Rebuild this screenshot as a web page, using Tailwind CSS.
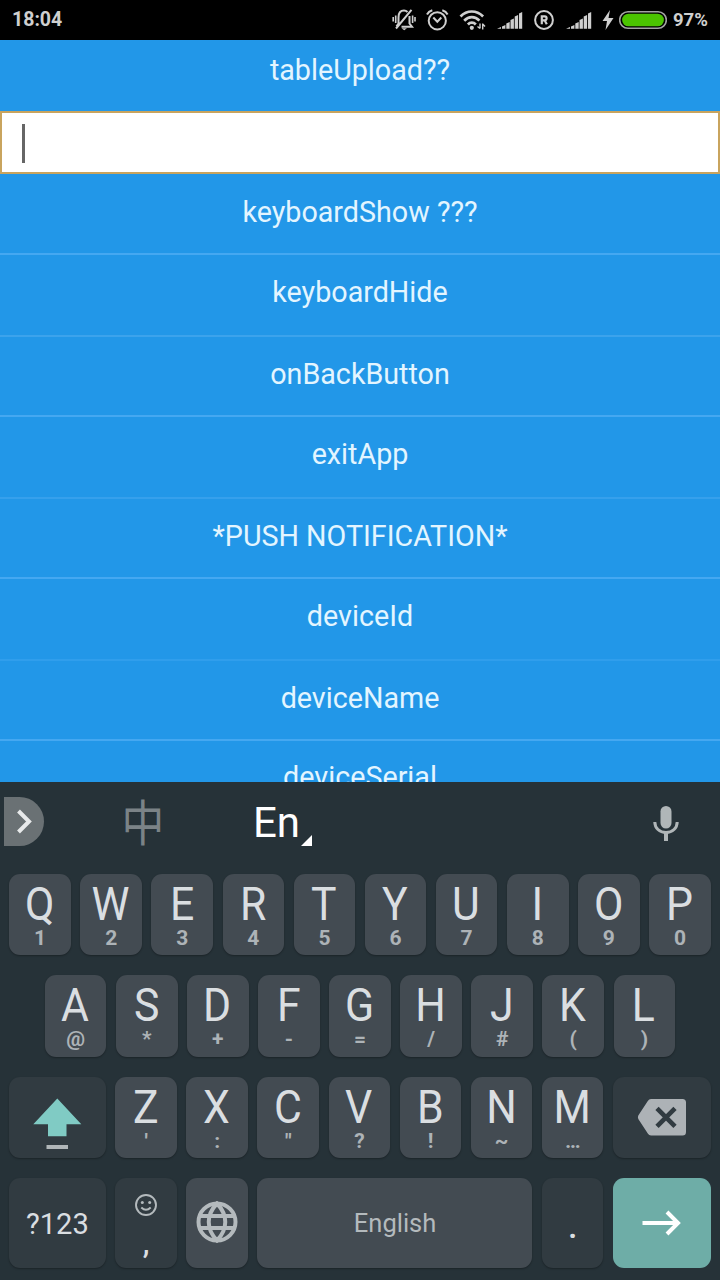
<!DOCTYPE html>
<html lang="en">
<head>
<meta charset="utf-8">
<title>Device test</title>
<script src="https://cdn.jsdelivr.net/npm/@tailwindcss/browser@4"></script>
</head>
<body class="w-[720px] h-[1280px] overflow-hidden flex flex-col bg-[#263238] font-['Roboto',sans-serif]">
<header class="h-10 shrink-0 bg-black flex items-center text-[#cfcfcf] pl-3">
  <span class="w-[380px] text-[19.5px] font-bold leading-10">18:04</span>
  <svg class="w-6 h-6 shrink-0" viewBox="0 0 24 24" fill="none" stroke="currentColor" stroke-width="2"><path d="M4.500 18.300L6.500 15.500V9.500C6.500 4.500 9 2.600 12 2.600Q14 2.600 15.500 4M17.500 8V15.500L20 18.700H9.500M4 20.500L19.500 1.800"/><path d="M3.700 7.500V15M1.200 9V13.500M20.600 7.500V15M23 9V13.500" stroke-width="1.600"/><path d="M9.500 20.200H15L12.200 22.300Z" fill="currentColor" stroke="none"/></svg>
  <svg class="w-6 h-6 ml-[9px] shrink-0" viewBox="0 0 24 24" fill="none" stroke="currentColor" stroke-width="2"><circle cx="12.300" cy="12.800" r="8.600"/><path d="M8.300 9.500L12.300 13.700L16.300 9.500M2 6.500Q3.500 3.300 7.300 2.200M22.600 6.500Q21.100 3.300 17.300 2.200"/></svg>
  <svg class="w-7 h-6 ml-[9px] shrink-0" viewBox="0 0 28 24" fill="none" stroke="currentColor" stroke-width="2.700"><path d="M2.500 8.500C9 1.800 18.500 1.800 25.100 8.500M6.200 12.700C10.700 8 17 8 21.400 12.700M9.900 16.500C12.200 14 15.500 14 17.800 16.500"/><circle cx="13.800" cy="19.800" r="2.100" fill="currentColor" stroke="none"/><path d="M22 15.500V20.500M24.700 15.500V21.500M19.500 18.500L22 20.500M24.700 16L27 18.500" stroke-width="1.400"/></svg>
  <svg class="w-[26px] h-6 ml-[11px] shrink-0" viewBox="0 0 26 24" fill="currentColor"><path d="M0 20.800L4 19V20.800ZM5 18.500L8.400 17V20.800H5ZM9.300 15.500L12.700 14V20.800H9.300ZM13.500 12L16.900 10.500V20.800H13.500ZM17.700 8.500L21.100 7V20.800H17.700ZM22 5.500L25.200 4V20.800H22Z"/></svg>
  <svg class="w-6 h-6 ml-[9px] shrink-0" viewBox="0 0 24 24" fill="none" stroke="currentColor"><circle cx="12" cy="12" r="8.900" stroke-width="2"/><path d="M9.800 16.200V8.300H12.700Q14.600 8.400 14.600 10.300Q14.600 12.300 12.700 12.300H9.800M12.600 12.300L14.800 16.200" stroke-width="2.200"/></svg>
  <svg class="w-[26px] h-6 ml-[10px] shrink-0" viewBox="0 0 26 24" fill="currentColor"><path d="M0 20.800L4 19V20.800ZM5 18.500L8.400 17V20.800H5ZM9.300 15.500L12.700 14V20.800H9.300ZM13.500 12L16.900 10.500V20.800H13.500ZM17.700 8.500L21.100 7V20.800H17.700ZM22 5.500L25.200 4V20.800H22Z"/></svg>
  <svg class="w-3 h-6 ml-[10px] shrink-0" viewBox="0 0 12 24" fill="currentColor"><path d="M8 2L.5 13H5L3.500 22L11.500 10H6.500Z"/></svg>
  <svg class="w-12 h-6 ml-[5px] shrink-0" viewBox="0 0 48 24"><rect x=".7" y="3.700" width="46.600" height="16.600" rx="8.300" fill="#000" stroke="#a3a3a3" stroke-width="1.600"/><rect x="3.100" y="5.700" width="41.800" height="12.600" rx="6.300" fill="#4bc400"/></svg>
  <span class="ml-[6px] text-[18.5px] font-bold leading-10">97%</span>
</header>

<main class="h-[742px] shrink-0 overflow-hidden bg-[#2297e8] text-[#e3f5ff] text-[28.7px] text-center flex flex-col">
  <div class="h-[71px] shrink-0 leading-[61px]">tableUpload??</div>
  <div class="h-[63px] shrink-0 bg-white border-2 border-[#c9a45e] flex items-center pl-[19.5px]"><div class="w-[3px] h-[39px] mt-px bg-[#666]"></div></div>
  <div class="h-[81px] shrink-0 leading-[77px] border-b-2 border-[#45a8f1]">keyboardShow ???</div>
  <div class="h-[82px] shrink-0 leading-[74px] border-b-2 border-[#3ca3ec]">keyboardHide</div>
  <div class="h-[80px] shrink-0 leading-[75px] border-b-2 border-[#45a8f1]">onBackButton</div>
  <div class="h-[82px] shrink-0 leading-[75px] border-b-2 border-[#36a0ec]">exitApp</div>
  <div class="h-[80px] shrink-0 leading-[75px] border-b-2 border-[#45a8f1]">*PUSH NOTIFICATION*</div>
  <div class="h-[82px] shrink-0 leading-[74px] border-b-2 border-[#309eec]">deviceId</div>
  <div class="h-[80px] shrink-0 leading-[75px] border-b-2 border-[#45a8f1]">deviceName</div>
  <div class="h-[82px] shrink-0 leading-[73px]">deviceSerial</div>
</main>

<section class="flex-1 flex flex-col text-[#dadee1]">
  <div class="h-[92px] shrink-0 flex items-start pl-1">
    <div class="mt-[15px] w-10 h-[49px] rounded-r-full bg-[#6a7174]"><svg class="w-10 h-[49px]" viewBox="0 0 40 49" fill="none" stroke="#e8eaeb" stroke-width="4"><path d="M14.500 14L25 24.500L14.500 35"/></svg></div>
    <span class="ml-[76px] mt-[14px] w-[46px] text-[46px] leading-[49px] scale-x-[0.93] scale-y-[1.07] text-[#7b8387] font-['Noto_Sans_CJK_SC',sans-serif]">中</span>
    <span class="ml-[87px] mt-[16px] w-[47px] text-[42px] leading-[49px] text-white">En</span>
    <svg class="w-[11px] h-[11px] mt-[53px] ml-[1px]" viewBox="0 0 11 11" fill="#fff"><path d="M11 0V11H0Z"/></svg>
    <svg class="w-[26px] h-[36px] mt-[23px] ml-auto mr-[41px]" viewBox="0 0 26 36" fill="none" stroke="#b0b6b8" stroke-width="3"><rect x="7.500" y="1" width="11" height="22.500" rx="5.500" fill="#b0b6b8" stroke="none"/><path d="M1.800 17C1.800 23 6.500 27.500 13 27.500S24.200 23 24.200 17"/><path d="M13 27V36" stroke-width="4"/></svg>
  </div>
  <div class="flex flex-col gap-5 pl-[9px] w-[711px]">
    <div data-keys="Q1 W2 E3 R4 T5 Y6 U7 I8 O9 P0" class="flex justify-center gap-[9.5px] h-[81.3px]"></div>
    <div data-keys="A@ S* D+ F- G= H/ J# K( L)" class="flex justify-center gap-[9.5px] h-[81.3px]"></div>
    <div class="flex gap-[9.5px] h-[81.3px]">
      <div class="w-[96.800px] shrink-0 rounded-[11px] bg-[#313b41] shadow-[0_1px_2px_rgba(0,0,0,0.3)]"><svg class="w-[97px] h-[81px]" viewBox="0 0 97 81"><path d="M48.300 21.500L72.300 47.200H57.500V59.200H39V47.200H24.300Z" fill="#80cbc4"/><path d="M37.500 68H59V72H37.500Z" fill="#b0b6b8"/></svg></div>
      <div data-keys="Z' X: C&quot; V? B! N~ M…" class="flex gap-[9.5px] shrink-0"></div>
      <div class="w-[98px] shrink-0 rounded-[11px] bg-[#313b41] shadow-[0_1px_2px_rgba(0,0,0,0.3)]"><svg class="w-[98px] h-[81px]" viewBox="0 0 98 81"><path d="M36 22H69.500Q73 22 73 25.500V55Q73 58.500 69.500 58.500H38Q36 58.500 34.800 56.500L25.300 42Q24.500 40.300 25.300 38.500L34.800 24Q36 22 38 22Z" fill="#adb2b6"/><path d="M44 31.300L62 49.300M62 31.300L44 49.300" stroke="#313b41" stroke-width="4.600"/></svg></div>
    </div>
    <div class="flex gap-[9.5px] h-[90px]">
      <div class="w-[96.800px] shrink-0 rounded-[11px] bg-[#313b41] shadow-[0_1px_2px_rgba(0,0,0,0.3)] text-center text-[30px] leading-[91px]"><span class="inline-block scale-x-[0.97]">?123</span></div>
      <div class="w-[61.6px] shrink-0 rounded-[11px] bg-[#313b41] shadow-[0_1px_2px_rgba(0,0,0,0.3)] flex flex-col items-center">
        <svg class="w-6 h-6 mt-[15px]" viewBox="0 0 24 24" fill="none" stroke="#b4babd" stroke-width="1.900"><circle cx="12" cy="12" r="10"/><path d="M7.300 14.500Q12 19 16.700 14.500"/><circle cx="8.300" cy="9.500" r="1.500" fill="#b4babd" stroke="none"/><circle cx="15.700" cy="9.500" r="1.500" fill="#b4babd" stroke="none"/></svg>
        <span class="text-[30px] leading-[32px] mt-[10px] font-medium">,</span>
      </div>
      <div class="w-[61.6px] shrink-0 rounded-[11px] bg-[#434b52] shadow-[0_1px_2px_rgba(0,0,0,0.3)] flex items-center justify-center">
        <svg class="w-[42px] h-[42px] mr-[1px] mb-[1px]" viewBox="0 0 42 42" fill="none" stroke="#b4babd" stroke-width="4"><circle cx="21" cy="21" r="18.500"/><path d="M21 2.500C10 14 10 28 21 39.500C32 28 32 14 21 2.500ZM4 15H38M4 27H38"/></svg>
      </div>
      <div class="w-[274.900px] shrink-0 rounded-[11px] bg-[#434b52] shadow-[0_1px_2px_rgba(0,0,0,0.3)] text-center text-[26px] leading-[91px] text-[#b4babd]"><span class="inline-block scale-x-[0.98]">English</span></div>
      <div class="w-[61.6px] shrink-0 rounded-[11px] bg-[#313b41] shadow-[0_1px_2px_rgba(0,0,0,0.3)] text-center text-[34px] font-medium leading-[97px]">.</div>
      <div class="w-[98px] shrink-0 rounded-[11px] bg-[#6eada7]"><svg class="w-[98px] h-[90px]" viewBox="0 0 98 90" fill="none" stroke="#fff" stroke-width="4"><path d="M29.500 45H64M54 34L65 45L54 56"/></svg></div>
    </div>
  </div>
</section>
<script>
document.querySelectorAll('[data-keys]').forEach(function (row) {
  row.dataset.keys.split(' ').forEach(function (k) {
    var key = document.createElement('div');
    key.className = 'w-[61.6px] shrink-0 rounded-[11px] bg-[#434b52] shadow-[0_1px_2px_rgba(0,0,0,0.3)] flex flex-col items-center pt-[6px]';
    var main = document.createElement('span');
    main.className = 'h-12 text-[46px] leading-[48px] scale-x-[0.93] mr-px';
    main.textContent = k[0];
    var alt = document.createElement('span');
    alt.className = 'h-5 text-[21px] leading-5 font-bold text-[#adb3b7]';
    alt.textContent = k[1];
    key.append(main, alt);
    row.append(key);
  });
});
</script>
</body>
</html>
